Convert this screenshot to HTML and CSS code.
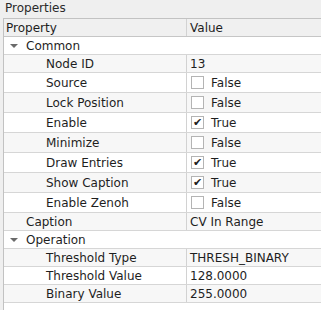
FILE: index.html
```html
<!DOCTYPE html>
<html lang="en">
<head>
  <meta charset="UTF-8" />
  <title>Properties</title>
  <link rel="stylesheet" href="styles.css">
</head>
<body>

<div class="panel">
  <div class="panel-title">Properties</div>
  <div class="tree">
    <div class="head">
      <div class="col-name">Property</div>
      <div class="col-value">Value</div>
    </div>

    <div class="row group">
      <span class="arrow"></span>Common
    </div>
    <div class="row alt">
      <div class="col-name child">Node ID</div>
      <div class="col-value">13</div>
    </div>
    <div class="row tall">
      <div class="col-name child">Source</div>
      <div class="col-value"><span class="check"></span>False</div>
    </div>
    <div class="row tall alt">
      <div class="col-name child">Lock Position</div>
      <div class="col-value"><span class="check"></span>False</div>
    </div>
    <div class="row tall">
      <div class="col-name child">Enable</div>
      <div class="col-value"><span class="check on">&#10004;</span>True</div>
    </div>
    <div class="row tall alt">
      <div class="col-name child">Minimize</div>
      <div class="col-value"><span class="check"></span>False</div>
    </div>
    <div class="row tall">
      <div class="col-name child">Draw Entries</div>
      <div class="col-value"><span class="check on">&#10004;</span>True</div>
    </div>
    <div class="row tall alt">
      <div class="col-name child">Show Caption</div>
      <div class="col-value"><span class="check on">&#10004;</span>True</div>
    </div>
    <div class="row tall">
      <div class="col-name child">Enable Zenoh</div>
      <div class="col-value"><span class="check"></span>False</div>
    </div>
    <div class="row alt">
      <div class="col-name top">Caption</div>
      <div class="col-value">CV In Range</div>
    </div>

    <div class="row group">
      <span class="arrow"></span>Operation
    </div>
    <div class="row alt">
      <div class="col-name child">Threshold Type</div>
      <div class="col-value">THRESH_BINARY</div>
    </div>
    <div class="row">
      <div class="col-name child">Threshold Value</div>
      <div class="col-value">128.0000</div>
    </div>
    <div class="row alt">
      <div class="col-name child">Binary Value</div>
      <div class="col-value">255.0000</div>
    </div>
  </div>
</div>

</body>
</html>
```

FILE: styles.css
```css
* {
  box-sizing: border-box;
}

body, html {
  margin: 0;
  padding: 0;
  height: 100%;
  overflow: hidden;
  background: #efefef;
  font-family: "DejaVu Sans", sans-serif;
  font-size: 12px;
  color: #1e1e1e;
}

.panel {
  display: flex;
  flex-direction: column;
  height: 100%;
}

.panel-title {
  height: 18px;
  padding: 0 0 0 5px;
  line-height: 16px;
  color: #2a2a2a;
}

.tree {
  flex: 1;
  margin-left: 3px;
  background: #ffffff;
  border-left: 1px solid #c2c2c2;
  border-top: 1px solid #c2c2c2;
}

.head {
  display: flex;
  height: 18px;
  background: #f0f0f0;
  border-bottom: 1px solid #c6c6c6;
}

.head .col-name {
  padding-left: 2px;
}

.col-name {
  width: 183px;
  flex: none;
  display: flex;
  align-items: center;
  border-right: 1px solid #d2d2d2;
}

.col-value {
  flex: 1;
  display: flex;
  align-items: center;
  padding-left: 3px;
}

.row {
  display: flex;
  height: 18px;
  border-bottom: 1px solid #d6d6d6;
}

.row.tall {
  height: 20px;
}

.row.alt {
  background: #f7f7f7;
}

.row.group {
  align-items: center;
}

.child {
  padding-left: 42px;
}

.top {
  padding-left: 22px;
}

.arrow {
  width: 0;
  height: 0;
  margin: 0 8px 0 6px;
  border-left: 4px solid transparent;
  border-right: 4px solid transparent;
  border-top: 4px solid #6a6a6a;
}

.check {
  width: 13px;
  height: 13px;
  margin: 0 7px 0 1px;
  background: #ffffff;
  border: 1px solid #b4b4b4;
  display: flex;
  align-items: center;
  justify-content: center;
  font-size: 11px;
  line-height: 11px;
  color: #1e1e1e;
}
```
